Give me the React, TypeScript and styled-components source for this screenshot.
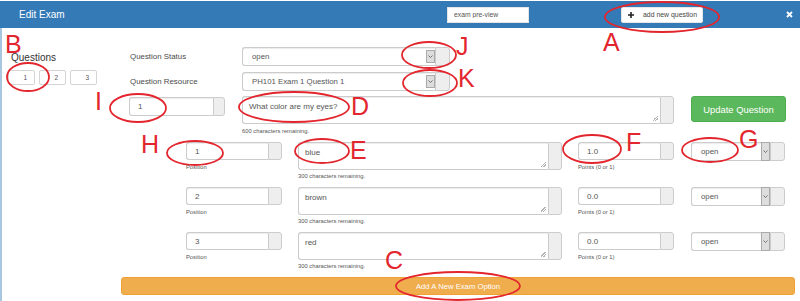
import React from 'react';
import styled, { createGlobalStyle } from 'styled-components';

interface ExamOption {
  position: string;
  answer: string;
  points: string;
  status: string;
}

const options: ExamOption[] = [
  { position: '1', answer: 'blue', points: '1.0', status: 'open' },
  { position: '2', answer: 'brown', points: '0.0', status: 'open' },
  { position: '3', answer: 'red', points: '0.0', status: 'open' },
];

// red review marks drawn on top of the screenshot
const rings = [
  { cx: 662, cy: 17, rx: 57, ry: 15 },
  { cx: 28, cy: 77, rx: 21, ry: 14 },
  { cx: 429, cy: 55, rx: 27, ry: 13 },
  { cx: 430, cy: 83, rx: 27, ry: 13 },
  { cx: 138, cy: 108, rx: 28, ry: 14 },
  { cx: 294, cy: 107, rx: 55, ry: 15 },
  { cx: 195, cy: 153, rx: 28, ry: 12 },
  { cx: 322, cy: 151, rx: 27, ry: 12 },
  { cx: 592, cy: 149, rx: 29, ry: 14 },
  { cx: 710, cy: 150, rx: 28, ry: 12 },
  { cx: 458, cy: 286, rx: 62, ry: 14 },
];

const letters = [
  { ch: 'A', x: 603, y: 30 },
  { ch: 'B', x: 5, y: 32 },
  { ch: 'J', x: 456, y: 34 },
  { ch: 'K', x: 458, y: 66 },
  { ch: 'I', x: 95, y: 89 },
  { ch: 'D', x: 351, y: 94 },
  { ch: 'H', x: 141, y: 132 },
  { ch: 'E', x: 350, y: 138 },
  { ch: 'F', x: 626, y: 130 },
  { ch: 'G', x: 739, y: 127 },
  { ch: 'C', x: 385, y: 248 },
];

const Chevron = () => (
  <svg width='5' height='3' viewBox='0 0 5 3'>
    <path d='M0.5 0.5 L2.5 2.5 L4.5 0.5' fill='none' stroke='#666' strokeWidth='0.9' />
  </svg>
);

const Select = ({ value, inset }: { value: string; inset?: boolean }) => (
  <Group $h={19}>
    <SelectBox>
      <span>{value}</span>
      <Caret $inset={inset}>
        <Chevron />
      </Caret>
    </SelectBox>
    <Addon $w={15} />
  </Group>
);

export default function App() {
  return (
    <>
      <GlobalStyle />
      <Modal>
        {/* Header */}
        <Header>
          <Title>Edit Exam</Title>
          <PreviewInput readOnly value='exam pre-view' />
          <span />
          <AddButton>
            <svg width='6' height='6' viewBox='0 0 6 6'>
              <path d='M3 0 V6 M0 3 H6' stroke='#222' strokeWidth='1.6' />
            </svg>
            add new question
          </AddButton>
          <Close>
            <svg width='7' height='7' viewBox='0 0 7 7'>
              <path d='M1 1 L6 6 M6 1 L1 6' stroke='#fff' strokeWidth='1.8' />
            </svg>
          </Close>
        </Header>

        <Body>
          {/* Question list */}
          <Sidebar>
            <SideTitle>Questions</SideTitle>
            <QuestionTabs>
              {['1', '2', '3'].map((n) => (
                <QuestionTab key={n}>{n}</QuestionTab>
              ))}
            </QuestionTabs>
          </Sidebar>

          <Main>
            <MetaRow>
              <Label>Question Status</Label>
              <Select value='open' inset />
            </MetaRow>
            <MetaRow>
              <Label>Question Resource</Label>
              <Select value='PH101 Exam 1 Question 1' inset />
            </MetaRow>

            <QuestionRow>
              <Group $h={19} style={{ marginTop: 1 }}>
                <TextInput readOnly value='1' />
                <Addon $w={12} />
              </Group>
              <div>
                <Group $h={28}>
                  <TextArea readOnly value='What color are my eyes?' />
                  <Addon />
                </Group>
                <Hint>600 characters remaining.</Hint>
              </div>
              <UpdateButton>Update Question</UpdateButton>
            </QuestionRow>

            <Options>
              {options.map((o) => (
                <OptionRow key={o.position}>
                  <div>
                    <Group $h={18}>
                      <TextInput readOnly value={o.position} />
                      <Addon />
                    </Group>
                    <Hint>Position</Hint>
                  </div>
                  <div>
                    <Group $h={28}>
                      <TextArea readOnly value={o.answer} />
                      <Addon />
                    </Group>
                    <Hint $gap={2}>300 characters remaining.</Hint>
                  </div>
                  <div>
                    <Group $h={18}>
                      <TextInput readOnly value={o.points} />
                      <Addon />
                    </Group>
                    <Hint>Points (0 or 1)</Hint>
                  </div>
                  <Select value={o.status} />
                </OptionRow>
              ))}
            </Options>

            <AddOptionBar>Add A New Exam Option</AddOptionBar>
          </Main>
        </Body>

        {/* Review marks */}
        <Marks>
          <svg width='800' height='301'>
            {rings.map((r, i) => (
              <ellipse key={i} {...r} fill='none' stroke='#e3262d' strokeWidth='1.8' />
            ))}
          </svg>
          {letters.map((l) => (
            <Letter key={l.ch} $x={l.x} $y={l.y}>
              {l.ch}
            </Letter>
          ))}
        </Marks>
      </Modal>
    </>
  );
}

const GlobalStyle = createGlobalStyle`
  html, body {
    margin: 0;
    padding: 0;
    background: #fff;
  }
  body {
    font-family: 'Liberation Sans', Arial, sans-serif;
    color: #333;
  }
  * {
    box-sizing: border-box;
  }
`;

const Modal = styled.div`
  position: relative;
  width: 800px;
  height: 301px;
  overflow: hidden;
  background: #fff;
`;

// ------------------------------- Header ------------------------------- //
const Header = styled.header`
  display: grid;
  grid-template-columns: 447px 82px 92px 82px 1fr;
  align-items: center;
  height: 27px;
  margin-top: 1px;
  background: #337ab7;
`;

const Title = styled.h1`
  margin: 0;
  padding-left: 19px;
  color: #fff;
  font-size: 10px;
  font-weight: 400;
`;

const PreviewInput = styled.input`
  height: 16px;
  border: 1px solid #e4e4e4;
  background: #fff;
  padding: 0 6px;
  font-family: 'Liberation Sans', Arial, sans-serif;
  font-size: 6.8px;
  color: #555;
  outline: none;
`;

const AddButton = styled.button`
  display: flex;
  align-items: center;
  gap: 9px;
  height: 16px;
  padding: 0 0 0 6px;
  border: 1px solid #e6e6e6;
  border-radius: 2px;
  background: #fff;
  font-family: 'Liberation Sans', Arial, sans-serif;
  font-size: 6.9px;
  color: #444;
`;

const Close = styled.span`
  justify-self: end;
  display: flex;
  padding-right: 7px;
`;

// ------------------------------- Body ------------------------------- //
const Body = styled.div`
  display: flex;
  height: 273px;
  border-left: 2px solid #a9c6e1;
`;

const Sidebar = styled.aside`
  width: 119px;
  padding: 24px 0 0 6px;
`;

const SideTitle = styled.h2`
  margin: 0 0 0 3px;
  font-size: 10px;
  line-height: 12px;
  font-weight: 400;
  color: #333;
`;

const QuestionTabs = styled.div`
  display: flex;
  gap: 4px;
  margin-top: 6px;
`;

const QuestionTab = styled.button`
  width: 27px;
  height: 15px;
  padding: 0 7px 0 0;
  border: 1px solid #d4d4d4;
  border-radius: 2px;
  background: #fff;
  text-align: right;
  font-family: 'Liberation Sans', Arial, sans-serif;
  font-size: 6.5px;
  color: #555;
`;

const Main = styled.main`
  width: 674px;
  padding-top: 19px;
  display: flex;
  flex-direction: column;
`;

const MetaRow = styled.div`
  display: grid;
  grid-template-columns: 121px 208px;
  align-items: center;
  margin-bottom: 6px;
`;

const Label = styled.label`
  padding-left: 9px;
  font-size: 7.9px;
  color: #4a4a4a;
`;

const Group = styled.div<{ $h: number }>`
  display: flex;
  height: ${({ $h }) => $h}px;
`;

const controlBase = `
  flex: 1;
  min-width: 0;
  height: 100%;
  border: 1px solid #ccc;
  border-right: none;
  border-radius: 3px 0 0 3px;
  box-shadow: inset 0 1px 1px rgba(0, 0, 0, 0.075);
  background-color: #fff;
  font-family: 'Liberation Sans', Arial, sans-serif;
  color: #555;
  outline: none;
`;

const TextInput = styled.input`
  ${controlBase}
  padding: 0 0 0 8px;
  font-size: 8px;
`;

// small drawn grip instead of the browser's big resizer
const TextArea = styled.textarea`
  ${controlBase}
  padding: 4px 6px;
  font-size: 8px;
  line-height: 11px;
  resize: none;
  overflow: hidden;
  background-image: linear-gradient(
    135deg,
    transparent 0 40%,
    #b5b5b5 40% 52%,
    transparent 52% 68%,
    #b5b5b5 68% 80%,
    transparent 80%
  );
  background-repeat: no-repeat;
  background-size: 5px 5px;
  background-position: right 2px bottom 2px;
`;

const SelectBox = styled.div`
  ${controlBase}
  display: flex;
  align-items: center;
  justify-content: space-between;
  padding-left: 9px;
  font-size: 7.8px;
`;

const Caret = styled.span<{ $inset?: boolean }>`
  align-self: stretch;
  display: flex;
  align-items: center;
  justify-content: center;
  width: 9px;
  margin: ${({ $inset }) => ($inset ? '2px 0' : '-1px 0')};
  background: #ddd;
  border: 1px solid #aaa;
`;

const Addon = styled.span<{ $w?: number }>`
  flex: none;
  width: ${({ $w }) => $w ?? 14}px;
  background: #eee;
  border: 1px solid #ccc;
  border-radius: 0 3px 3px 0;
`;

const Hint = styled.span<{ $gap?: number }>`
  display: block;
  margin-top: ${({ $gap }) => $gap ?? 3}px;
  font-size: 5.8px;
  line-height: 8px;
  color: #555;
`;

const QuestionRow = styled.div`
  display: grid;
  grid-template-columns: 96px 432px 95px;
  column-gap: 17px;
  align-items: start;
  padding-left: 8px;
  margin-top: -1px;
`;

const UpdateButton = styled.button`
  height: 26px;
  border: 1px solid #4cae4c;
  border-radius: 3px;
  background: #5cb85c;
  color: #fff;
  font-family: 'Liberation Sans', Arial, sans-serif;
  font-size: 9.4px;
`;

const Options = styled.div`
  margin-top: 7px;
`;

const OptionRow = styled.div`
  display: grid;
  grid-template-columns: 96px 264px 96px 95px;
  column-gap: 16px;
  align-items: start;
  height: 45px;
  padding-left: 65px;

  & > :last-child {
    margin-left: 1px;
  }
`;

const AddOptionBar = styled.button`
  height: 18px;
  border: 1px solid #eea236;
  border-radius: 3px;
  background: #f0ad4e;
  color: #fff;
  font-family: 'Liberation Sans', Arial, sans-serif;
  font-size: 7.7px;
`;

// ------------------------------- Marks ------------------------------- //
const Marks = styled.div`
  position: absolute;
  inset: 0;
  pointer-events: none;

  svg {
    position: absolute;
    inset: 0;
  }
`;

const Letter = styled.span<{ $x: number; $y: number }>`
  position: absolute;
  left: ${({ $x }) => $x}px;
  top: ${({ $y }) => $y}px;
  font-family: 'Liberation Sans', Arial, sans-serif;
  font-size: 25px;
  line-height: 1;
  color: #e3262d;
`;
